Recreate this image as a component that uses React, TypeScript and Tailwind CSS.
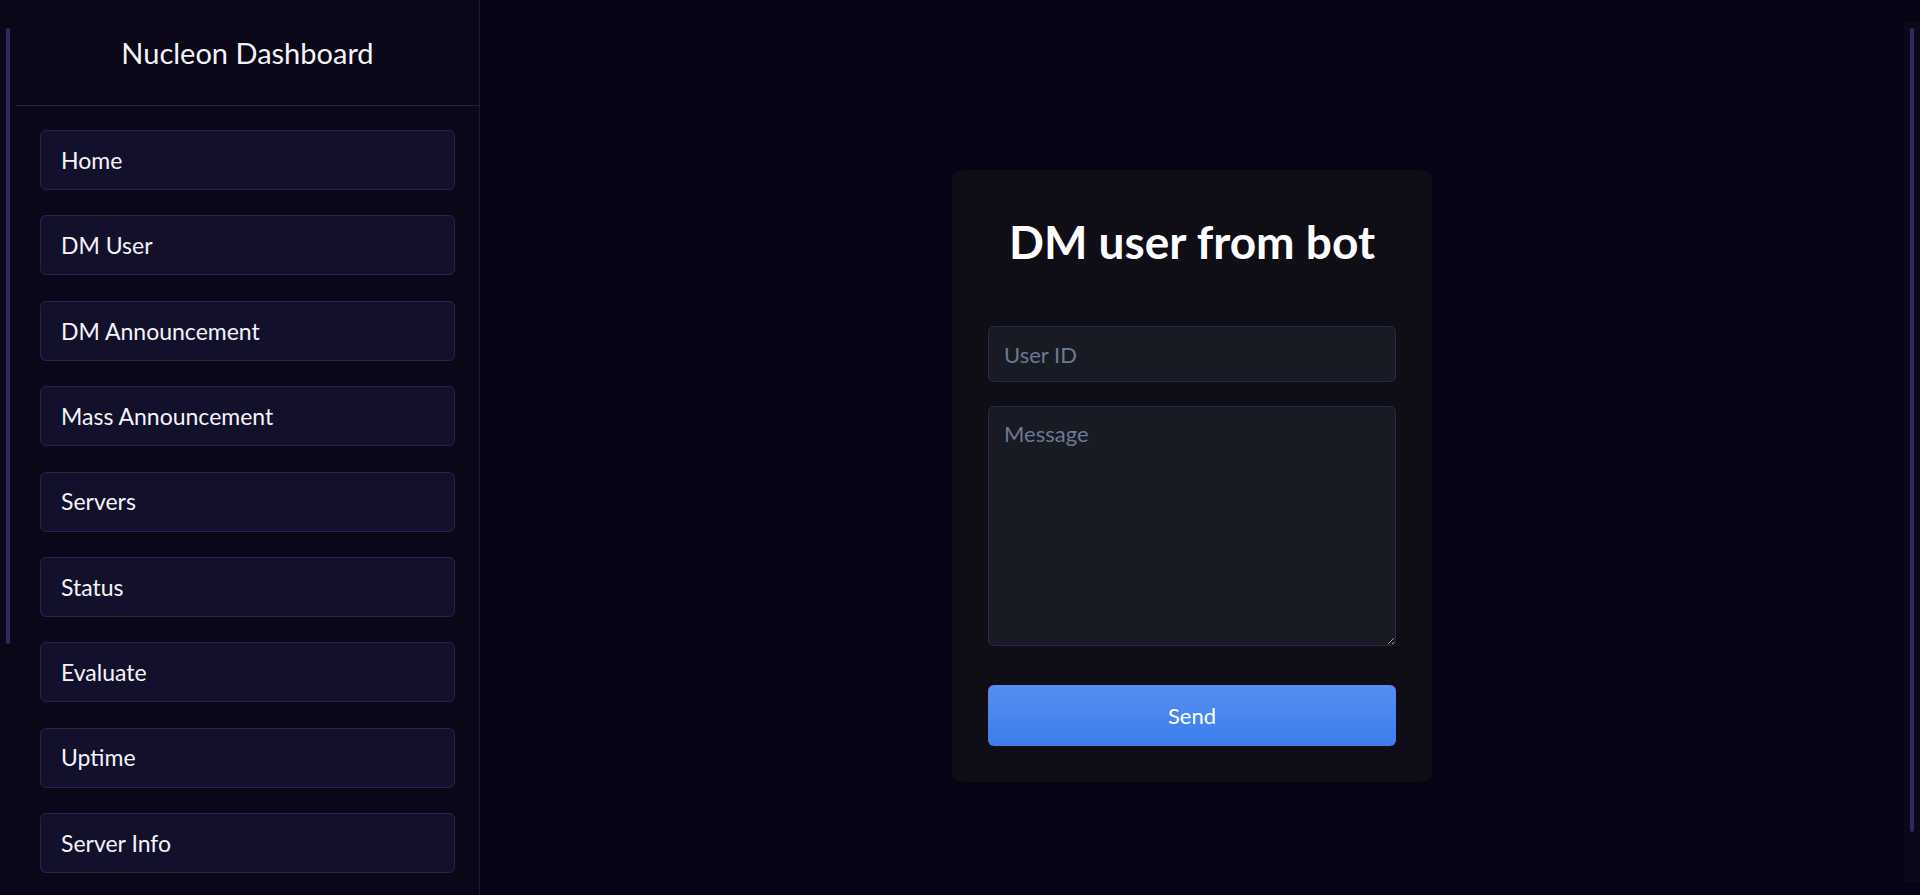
const navItems = [
  "Home",
  "DM User",
  "DM Announcement",
  "Mass Announcement",
  "Servers",
  "Status",
  "Evaluate",
  "Uptime",
  "Server Info",
];

// the browser hides native scrollbars, so the gutter + thumb are drawn by hand
function Gutter({ thumb, track }: { thumb: string; track?: boolean }) {
  return (
    <div className="w-4 shrink-0 h-full pt-[22px] pb-[13px]">
      <div className={`h-full px-[6px] pt-[6px] ${track ? "bg-[#0b0919]" : ""}`}>
        <div className={`w-1 rounded-full bg-[#2d2b5c] ${thumb}`} />
      </div>
    </div>
  );
}

function Sidebar() {
  return (
    <aside className="w-[480px] shrink-0 h-full flex bg-[#0a0818] border-r border-[#1c1a36]">
      <Gutter thumb="h-[616px]" />
      <div className="flex-1 h-full overflow-y-auto [scrollbar-width:none]">
        <div className="pb-[353px]">
          <div className="h-[106px] flex items-center justify-center border-b border-[#24224a]">
            <h1 className="text-[29px] text-[#f4f4f8]">Nucleon Dashboard</h1>
          </div>
          <nav className="px-6 pt-[24px] flex flex-col gap-[25.4px]">
            {navItems.map((item) => (
              <a
                key={item}
                href="#"
                className="h-[60px] flex items-center px-5 rounded-md bg-[#13102c] border border-[#272453] text-[23px] text-[#f4f4f8]"
              >
                {item}
              </a>
            ))}
          </nav>
        </div>
      </div>
    </aside>
  );
}

export default function App() {
  return (
    <div className="h-screen flex bg-[#060415] font-['Lato','Noto_Sans',sans-serif]">
      <Sidebar />
      <main className="flex-1 h-full overflow-y-auto [scrollbar-width:none]">
        <div className="pt-[170px] pb-[161px] flex justify-center">
          <form
            className="w-[480px] bg-[#0f0e17] rounded-[10px] px-9 pt-[45px] pb-9 flex flex-col"
            onSubmit={(e) => e.preventDefault()}
          >
            <h2 className="text-[46px] leading-[54px] font-bold text-white text-center mb-[57px]">
              DM user from bot
            </h2>
            <input
              type="text"
              placeholder="User ID"
              className="h-[56px] px-[15px] rounded-md bg-[#181b24] border border-[#29274f] text-[22px] text-white placeholder:text-[#6b7a93] outline-none"
            />
            <textarea
              placeholder="Message"
              className="mt-6 h-[240px] px-[15px] py-[10px] rounded-md bg-[#181b24] border border-[#29274f] text-[22px] text-white placeholder:text-[#6b7a93] outline-none"
            />
            <button
              type="submit"
              className="mt-[39px] h-[61px] rounded-md bg-gradient-to-b from-[#568ef1] to-[#3a7eec] text-white text-[22px]"
            >
              Send
            </button>
          </form>
        </div>
      </main>
      <Gutter thumb="h-[804px]" track />
    </div>
  );
}
